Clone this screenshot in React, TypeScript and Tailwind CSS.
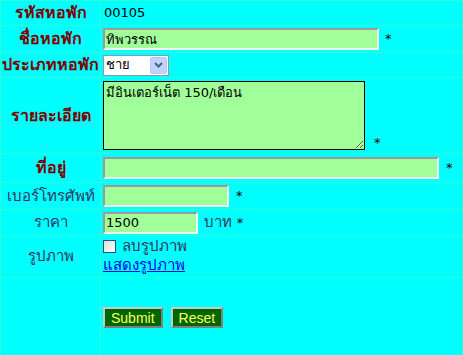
import React from "react";

const cell = "border border-[#2affd8] p-0";
const inset =
  "h-[22px] bg-[#a0ff98] border-2 border-t-[#9a9a9a] border-l-[#9a9a9a] border-b-[#f0f0f0] border-r-[#f0f0f0] px-[1px] text-[13px] outline-none";
const btn =
  "h-[21px] px-[6px] bg-[#006600] text-[#ffff66] border-2 border-t-[#c8c8c8] border-l-[#c8c8c8] border-b-[#808080] border-r-[#808080] text-[14px] leading-none";

export default function App() {
  return (
    <div className="w-[463px] h-[355px] bg-[#00ffff] overflow-hidden" style={{ fontFamily: "Tahoma, 'DejaVu Sans', sans-serif" }}>
      <table className="border-collapse w-[463px] text-[13px] text-black">
        <tbody>
          <tr className="h-[23px]">
            <td className={`${cell} w-[100px] text-center font-bold text-[16px] text-[#800000]`}>รหัสหอพัก</td>
            <td className={`${cell} pl-[3px]`}>00105</td>
          </tr>
          <tr className="h-[27px]">
            <td className={`${cell} text-center font-bold text-[16px] text-[#800000]`}>ชื่อหอพัก</td>
            <td className={`${cell} pl-[2px]`}>
              <div className="flex items-center gap-[6px]">
                <input defaultValue="ทิพวรรณ" className={`${inset} w-[276px]`} />
                <span>*</span>
              </div>
            </td>
          </tr>
          <tr className="h-[25px]">
            <td className={`${cell} text-center font-bold text-[16px] text-[#800000]`}>ประเภทหอพัก</td>
            <td className={`${cell} pl-[2px]`}>
              <div className="w-[66px] h-[21px] bg-white border border-[#7f9db9] flex items-center justify-between pl-[2px] pr-[1px]">
                <span>ชาย</span>
                <span className="w-[17px] h-[17px] rounded-[2px] bg-[#c1d3fb] border border-[#b5c8f0] flex items-center justify-center">
                  <svg width="9" height="6" viewBox="0 0 9 6"><path d="M1 1 L4.5 4.5 L8 1" stroke="#4d6185" strokeWidth="2" fill="none" /></svg>
                </span>
              </div>
            </td>
          </tr>
          <tr className="h-[76px]">
            <td className={`${cell} text-center font-bold text-[16px] text-[#800000]`}>รายละเอียด</td>
            <td className={`${cell} pl-[2px] pt-[2px] align-top`}>
              <div className="flex items-end gap-[9px] h-[70px]">
                <textarea defaultValue="มีอินเตอร์เน็ต 150/เดือน" className="block w-[262px] h-[69px] bg-[#a0ff98] border border-black px-[2px] py-[1px] text-[13px] resize-y outline-none" />
                <span className="leading-[14px]">*</span>
              </div>
            </td>
          </tr>
          <tr className="h-[29px]">
            <td className={`${cell} text-center font-bold text-[16px] text-[#800000]`}>ที่อยู่</td>
            <td className={`${cell} pl-[2px]`}>
              <div className="flex items-center gap-[7px]">
                <input className={`${inset} w-[336px]`} />
                <span>*</span>
              </div>
            </td>
          </tr>
          <tr className="h-[27px]">
            <td className={`${cell} text-center text-[15px] text-[#33335c]`}>เบอร์โทรศัพท์</td>
            <td className={`${cell} pl-[2px]`}>
              <div className="flex items-center gap-[7px]">
                <input className={`${inset} w-[126px]`} />
                <span>*</span>
              </div>
            </td>
          </tr>
          <tr className="h-[26px]">
            <td className={`${cell} text-center text-[15px] text-[#33335c]`}>ราคา</td>
            <td className={`${cell} pl-[2px]`}>
              <div className="flex items-center gap-[6px]">
                <input defaultValue="1500" className={`${inset} w-[95px]`} />
                <span className="text-[15px] text-[#33335c]">บาท <span className="text-[13px] text-black">*</span></span>
              </div>
            </td>
          </tr>
          <tr className="h-[42px]">
            <td className={`${cell} text-center text-[15px] text-[#33335c] align-middle`}>รูปภาพ</td>
            <td className={`${cell} pl-[2px] align-top pt-[1px]`}>
              <div className="flex items-center gap-[6px] text-[15px] leading-[19px] text-[#33335c]">
                <span className="w-[13px] h-[13px] border border-[#1c5180] bg-gradient-to-br from-[#dcdcd7] to-white inline-block" />
                <span>ลบรูปภาพ</span>
              </div>
              <a href="#" className="block text-[15px] text-[#0000ee] underline leading-[19px] w-fit">แสดงรูปภาพ</a>
            </td>
          </tr>
          <tr className="h-[80px]">
            <td className={`${cell}`}></td>
            <td className={`${cell} pl-[2px]`}>
              <div className="flex gap-[8px]" style={{ fontFamily: "'Liberation Sans', Arial, sans-serif" }}>
                <button className={btn}>Submit</button>
                <button className={btn}>Reset</button>
              </div>
            </td>
          </tr>
        </tbody>
      </table>
    </div>
  );
}
